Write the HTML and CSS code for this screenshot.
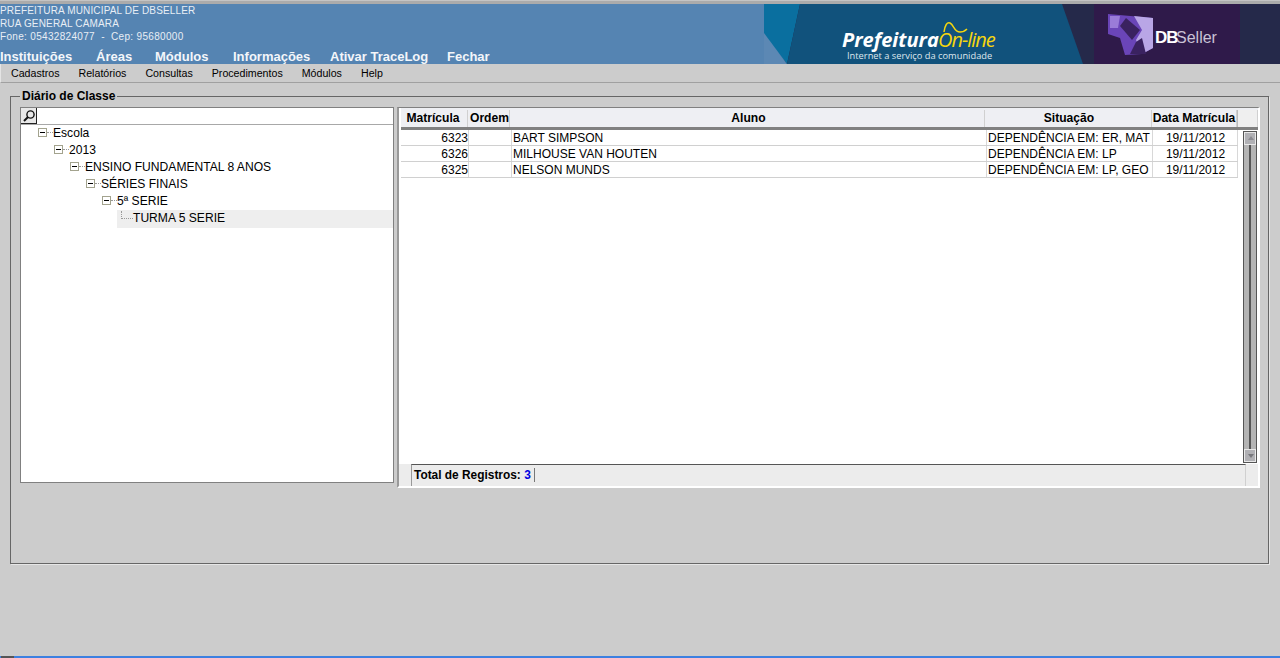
FILE: index.html
```html
<!DOCTYPE html>
<html lang="pt-BR">
<head>
    <meta charset="UTF-8">
    <title>Diário de Classe</title>
    <link rel="stylesheet" href="styles.css">
</head>
<body>
    <div class="topline"></div>
    <div class="header">
        <div class="header-left">
            <div class="info">
                <div>PREFEITURA MUNICIPAL DE DBSELLER</div>
                <div>RUA GENERAL CAMARA</div>
                <div class="fone">Fone: 05432824077 &nbsp;-&nbsp; Cep: 95680000</div>
            </div>
            <div class="mainmenu">
                <span class="m1">Instituições</span>
                <span class="m2">Áreas</span>
                <span class="m3">Módulos</span>
                <span class="m4">Informações</span>
                <span class="m5">Ativar TraceLog</span>
                <span>Fechar</span>
            </div>
        </div>
        <svg class="banner" width="516" height="60" viewBox="0 0 516 60">
            <rect width="516" height="60" fill="#25294a"/>
            <polygon points="0,0 36,0 23,60 0,32" fill="#0a6f9f"/>
            <polygon points="0,29 23,60 0,60" fill="#5c88b4"/>
            <polygon points="36,0 298,0 319,60 23,60" fill="#11527c"/>
            <rect x="330" width="146" height="60" fill="#2f1a4a"/>
            <g class="logo-mark">
                <polygon points="344,10 389,14 389,44 378,50 361,51 356,34 344,30" fill="#6a45b8"/>
                <polygon points="370,12 389,14 389,44 378,50 372,36 378,26" fill="#b9a6e6"/>
                <polygon points="362,14 376,26 368,36 356,22" fill="#3a2260"/>
                <polygon points="372,38 378,34 382,50 366,50" fill="#3a2260"/>
                <polygon points="346,12 356,12 354,24 346,24" fill="#9a7cd8"/>
            </g>
            <text x="78" y="43" class="logo-p">Prefeitura</text>
            <text x="174" y="43" class="logo-o">On-line</text>
            <path d="M180 28c1-7 3-10 6-9 4 2 4 9 10 9 3 0 5-1 7-3" fill="none" stroke="#f5d60e" stroke-width="1.5"/>
            <text x="83" y="55" class="logo-s">Internet a serviço da comunidade</text>
            <text x="391" y="39" class="logo-db">DB</text>
            <text x="412" y="39" class="logo-sel">Seller</text>
        </svg>
    </div>
    <div class="submenu">
        <span>Cadastros</span>
        <span>Relatórios</span>
        <span>Consultas</span>
        <span>Procedimentos</span>
        <span>Módulos</span>
        <span>Help</span>
    </div>

    <div class="content">
        <fieldset class="box">
            <legend>Diário de Classe</legend>
            <div class="panels">
                <div class="tree">
                    <div class="search">
                        <span class="search-btn">
                            <svg width="14" height="14" viewBox="0 0 14 14">
                                <circle cx="8.5" cy="5.5" r="3.6" fill="none" stroke="#111" stroke-width="1.4"/>
                                <path d="M6 8L2 12" stroke="#111" stroke-width="2"/>
                            </svg>
                        </span>
                    </div>
                    <div class="node l0"><i class="tg"></i><i class="dots"></i><span>Escola</span></div>
                    <div class="node l1"><i class="tg"></i><i class="dots"></i><span>2013</span></div>
                    <div class="node l2"><i class="tg"></i><i class="dots"></i><span>ENSINO FUNDAMENTAL 8 ANOS</span></div>
                    <div class="node l3"><i class="tg"></i><i class="dots"></i><span>SÉRIES FINAIS</span></div>
                    <div class="node l4"><i class="tg"></i><i class="dots"></i><span>5ª SERIE</span></div>
                    <div class="node leaf"><i class="leaf-line"></i><span>TURMA 5 SERIE</span></div>
                </div>

                <div class="grid">
                    <div class="grid-main">
                        <div class="grid-head">
                            <div class="c1">Matrícula</div>
                            <div class="c2">Ordem</div>
                            <div class="c3">Aluno</div>
                            <div class="c4">Situação</div>
                            <div class="c5">Data Matrícula</div>
                            <div class="c6"></div>
                        </div>
                        <div class="grid-body">
                            <div class="rows">
                                <div class="row">
                                    <div class="c1 num">6323</div><div class="c2"></div>
                                    <div class="c3">BART SIMPSON</div>
                                    <div class="c4">DEPENDÊNCIA EM: ER, MAT</div>
                                    <div class="c5 mid">19/11/2012</div>
                                </div>
                                <div class="row">
                                    <div class="c1 num">6326</div><div class="c2"></div>
                                    <div class="c3">MILHOUSE VAN HOUTEN</div>
                                    <div class="c4">DEPENDÊNCIA EM: LP</div>
                                    <div class="c5 mid">19/11/2012</div>
                                </div>
                                <div class="row">
                                    <div class="c1 num">6325</div><div class="c2"></div>
                                    <div class="c3">NELSON MUNDS</div>
                                    <div class="c4">DEPENDÊNCIA EM: LP, GEO</div>
                                    <div class="c5 mid">19/11/2012</div>
                                </div>
                            </div>
                            <div class="scroll">
                                <div class="arrow up"></div>
                                <div class="track"></div>
                                <div class="arrow down"></div>
                            </div>
                        </div>
                    </div>
                    <div class="grid-foot">
                        <div class="total">Total de Registros: <b>3</b></div>
                    </div>
                </div>
            </div>
        </fieldset>
    </div>

    <div class="taskbar"><span class="task-btn"></span></div>
</body>
</html>
```

FILE: styles.css
```css
* {
    box-sizing: border-box;
}
html, body {
    height: 658px;
}
body {
    margin: 0;
    overflow: hidden;
    display: flex;
    flex-direction: column;
    background-color: #cccccc;
    font-family: "Liberation Sans", Arial, sans-serif;
    font-size: 12px;
    color: #000;
}
.topline {
    height: 4px;
    background-color: #ababab;
    border-top: 1px solid #c4c4c4;
}
.header {
    height: 60px;
    display: flex;
    justify-content: space-between;
    background-color: #5584b2;
}
.header-left {
    display: flex;
    flex-direction: column;
    justify-content: space-between;
}
.info {
    color: #e8eef5;
    font-size: 10px;
    line-height: 13px;
    letter-spacing: 0.15px;
}
.fone {
    letter-spacing: 0.32px;
}
.mainmenu {
    display: flex;
    color: #f3f6fa;
    font-size: 13px;
    font-weight: bold;
    line-height: 15px;
}
.m1 { width: 96px; }
.m2 { width: 59px; }
.m3 { width: 78px; }
.m4 { width: 97px; }
.m5 { width: 117px; }
.banner {
    display: block;
}
.logo-mark {
    filter: blur(0.6px);
}
.logo-p {
    font-family: "Open Sans", sans-serif;
    font-size: 20px;
    font-weight: 700;
    font-style: italic;
    fill: #fff;
}
.logo-o {
    font-family: "Open Sans", sans-serif;
    font-size: 20px;
    font-style: italic;
    fill: #f5d60e;
    letter-spacing: -1px;
}
.logo-s {
    font-family: "Open Sans", sans-serif;
    font-size: 9.3px;
    fill: #dfe7ee;
}
.logo-db {
    font-family: "Liberation Sans", sans-serif;
    font-size: 17px;
    font-weight: bold;
    fill: #fff;
    letter-spacing: -1px;
}
.logo-sel {
    font-family: "Liberation Sans", sans-serif;
    font-size: 16px;
    fill: #c9c2d6;
}
.submenu {
    height: 19px;
    display: flex;
    align-items: center;
    padding-left: 10px;
    gap: 19px;
    font-size: 10.65px;
    background-color: #cccccc;
    border-bottom: 1px solid #a0a0a0;
    border-left: 1px solid #e4e4e4;
    padding-bottom: 1px;
}
.content {
    flex: 1;
    padding: 7px 11px 0 10px;
}
.box {
    margin: 0;
    padding: 4px 8px 0 9px;
    height: 474px;
    border: 1px solid #666;
    box-shadow: 1px 1px 0 #e6e6e6;
}
.box legend {
    margin-left: 0;
    padding: 0 2px;
    font-size: 12px;
    font-weight: bold;
    line-height: 13px;
}
.panels {
    display: flex;
    align-items: flex-start;
    gap: 3px;
}
.tree {
    width: 374px;
    height: 376px;
    background-color: #fff;
    border: 1px solid #808080;
}
.search {
    height: 17px;
    border-bottom: 1px solid #a8a8a8;
}
.search-btn {
    display: flex;
    align-items: center;
    justify-content: center;
    width: 16px;
    height: 16px;
    background-color: #e8e8e8;
    border-right: 1px solid #222;
    border-bottom: 1px solid #222;
}
.node {
    height: 17px;
    display: flex;
    align-items: center;
    padding-bottom: 2px;
    font-size: 12.1px;
    white-space: nowrap;
}
.l0 { padding-left: 17px; }
.l1 { padding-left: 33px; }
.l2 { padding-left: 49px; }
.l3 { padding-left: 65px; }
.l4 { padding-left: 81px; }
.tg {
    position: relative;
    width: 9px;
    height: 9px;
    border: 1px solid #a3a38e;
    background-color: #fff;
}
.tg::after {
    content: "";
    position: absolute;
    left: 1px;
    top: 3px;
    width: 5px;
    height: 1px;
    background-color: #000;
}
.dots {
    width: 6px;
    border-top: 1px dotted #999;
}
.leaf {
    margin-left: 96px;
    height: 18px;
    background-color: #eeeeee;
    padding-left: 4px;
}
.leaf-line {
    width: 12px;
    height: 8px;
    margin-top: -6px;
    border-left: 1px dotted #999;
    border-bottom: 1px dotted #999;
}
.grid {
    width: 863px;
    height: 381px;
    background-color: #fff;
    border-top: 1px solid #808080;
    border-left: 2px solid #999;
    border-right: 2px solid #fff;
    border-bottom: 2px solid #fff;
    display: flex;
    flex-direction: column;
}
.grid-main {
    flex: 1;
    min-height: 0;
}
.grid-head {
    display: flex;
    height: 22px;
    margin-left: 2px;
    padding-top: 2px;
    background-color: #eeeff3;
    border-bottom: 3px solid #808080;
    font-weight: bold;
    font-size: 12.1px;
    text-align: center;
    line-height: 17px;
}
.grid-head > div {
    border-right: 1px solid #d0d0d0;
    white-space: nowrap;
}
.c1 { width: 67px; }
.c2 { width: 42px; }
.c3 { width: 475px; }
.c4 { width: 167px; }
.c5 { width: 85px; }
.grid-head .c1 { padding-right: 2px; }
.grid-head .c2 { padding-left: 2px; }
.grid-head .c3 { padding-left: 3px; }
.grid-head .c4 { padding-left: 2px; }
.grid-head .c6 {
    width: 21px;
    background-color: #efefef;
    border-left: 1px solid #bbb;
}
.grid-body {
    display: flex;
    height: 334px;
    margin-left: 2px;
}
.rows {
    width: 837px;
}
.row {
    display: flex;
    height: 16px;
    line-height: 16px;
    border-bottom: 1px solid #d0d0d0;
    white-space: nowrap;
}
.row > div {
    border-right: 1px solid #d8d8d8;
    padding-left: 1px;
    overflow: hidden;
}
.row .c1 { width: 68px; }
.row .c2 { width: 43px; }
.row .c3 { width: 475px; }
.row .c4 { width: 166px; }
.row .c5 { width: 85px; }
.row .num {
    text-align: right;
    padding: 0;
}
.row .mid {
    text-align: center;
}
.scroll {
    width: 14px;
    margin: 1px 0 1px 5px;
    display: flex;
    flex-direction: column;
    border: 1px solid #555;
    background-color: #d6d6d6;
}
.arrow {
    height: 13px;
    background-color: #b0b0b4;
    border: 1px solid #e8e8e8;
    position: relative;
}
.arrow::after {
    content: "";
    position: absolute;
    left: 3px;
    border-left: 3px solid transparent;
    border-right: 3px solid transparent;
}
.up::after {
    top: 3px;
    border-bottom: 4px solid #8a8a90;
}
.down::after {
    top: 4px;
    border-top: 4px solid #77777c;
}
.track {
    flex: 1;
    background: linear-gradient(to right, #b4b4b4 0 5px, #555 5px 7px, #b4b4b4 7px);
}
.grid-foot {
    height: 22px;
    padding: 0 12px;
    background-color: #ececec;
    display: flex;
}
.total {
    flex: 1;
    height: 22px;
    border-top: 1px solid #555;
    border-left: 1px solid #999;
    border-right: 1px solid #d0d0d0;
    padding-left: 2px;
    padding-top: 2px;
    font-size: 11.9px;
    font-weight: bold;
    line-height: 16px;
}
.total b {
    color: #0000e0;
    padding-right: 3px;
    border-right: 1px solid #777;
}
.taskbar {
    height: 2px;
    background-color: #3d80e0;
    position: relative;
}
.task-btn {
    position: absolute;
    left: 1px;
    top: 0;
    width: 13px;
    height: 2px;
    background-color: #eee;
    border: 1px solid #555;
}
```
